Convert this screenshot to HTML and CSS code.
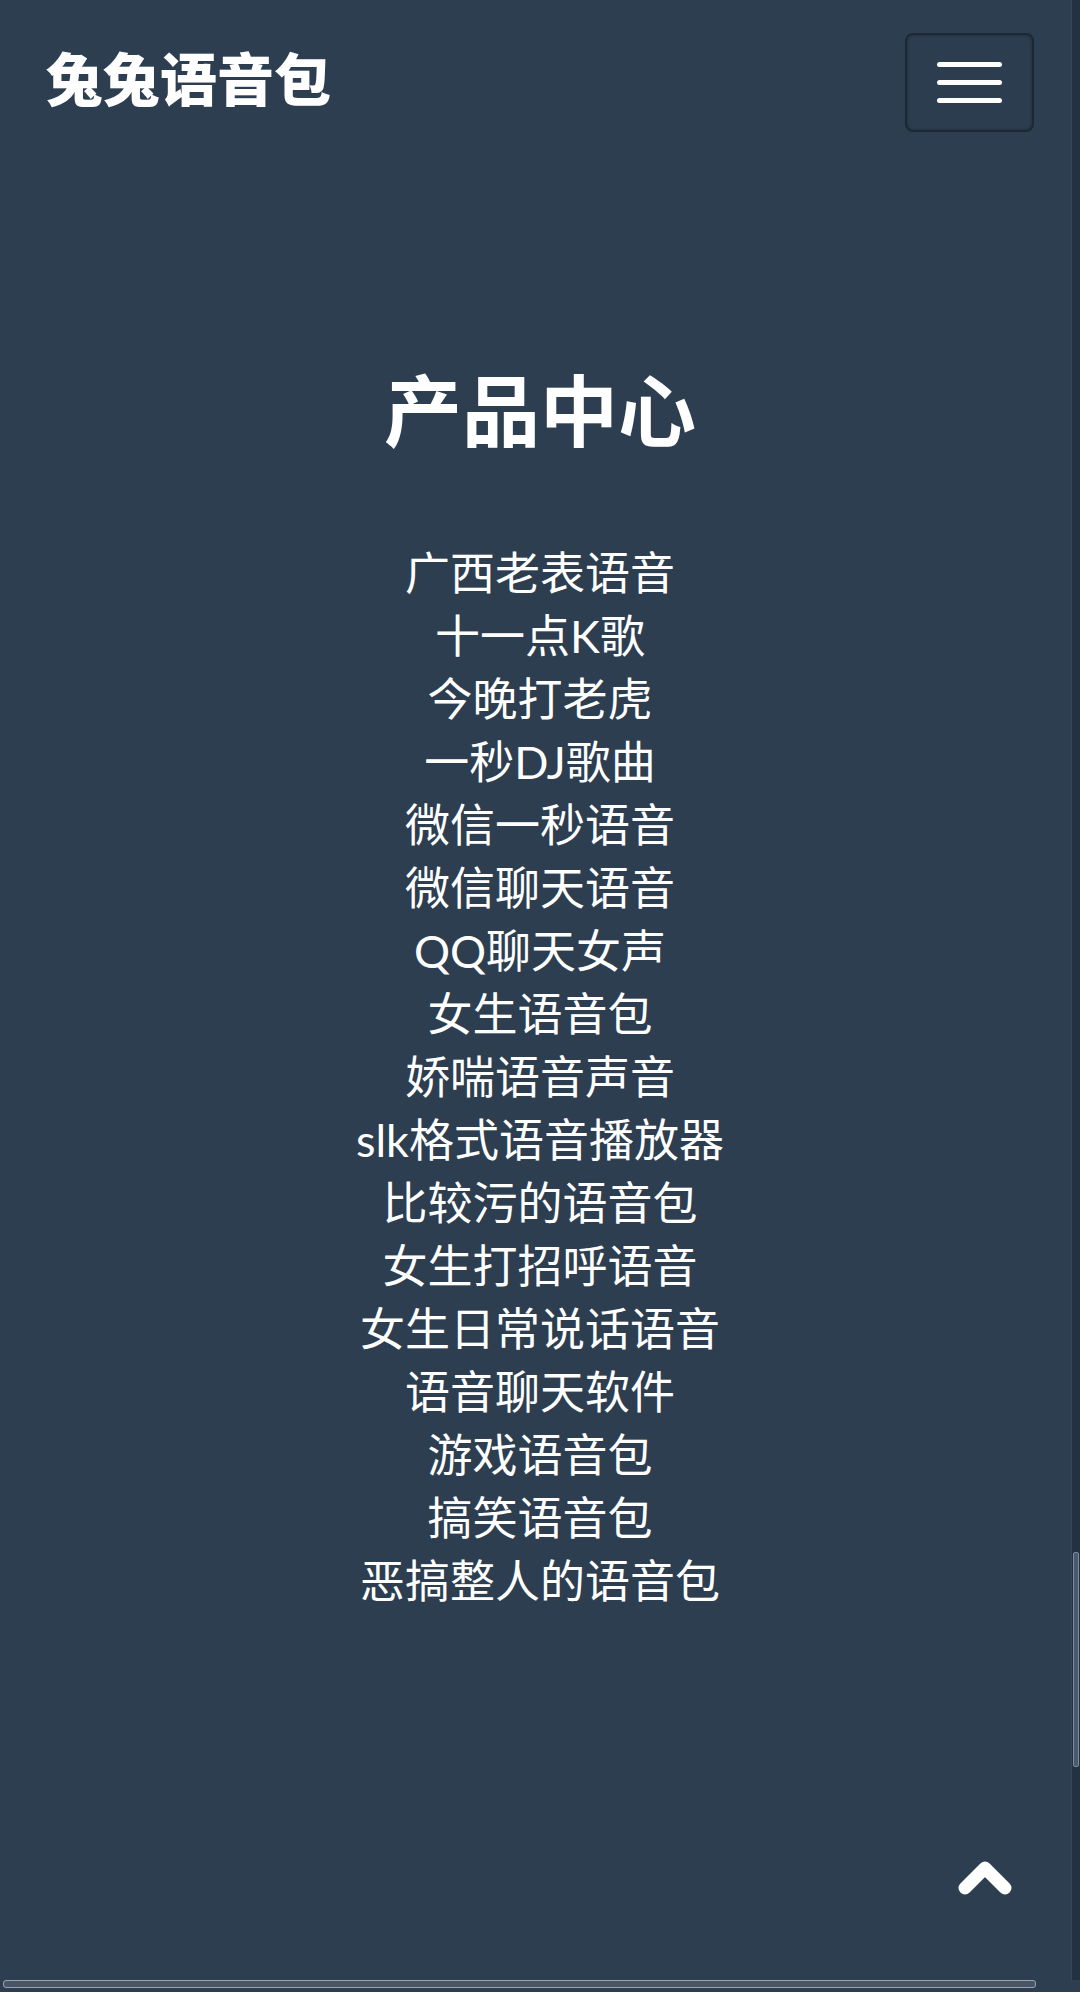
FILE: index.html
```html
<!DOCTYPE html>
<html lang="zh-CN">
<head>
<meta charset="utf-8">
<title>兔兔语音包</title>
<link rel="stylesheet" href="styles.css">
</head>
<body>
<nav class="navbar">
  <a class="brand" href="#">兔兔语音包</a>
  <button class="toggler" type="button" aria-label="菜单">
    <span class="bar"></span>
    <span class="bar"></span>
    <span class="bar"></span>
  </button>
</nav>
<section class="products">
  <h2 class="products-title">产品中心</h2>
  <ul class="product-list">
    <li>广西老表语音</li>
    <li>十一点K歌</li>
    <li>今晚打老虎</li>
    <li>一秒DJ歌曲</li>
    <li>微信一秒语音</li>
    <li>微信聊天语音</li>
    <li>QQ聊天女声</li>
    <li>女生语音包</li>
    <li>娇喘语音声音</li>
    <li>slk格式语音播放器</li>
    <li>比较污的语音包</li>
    <li>女生打招呼语音</li>
    <li>女生日常说话语音</li>
    <li>语音聊天软件</li>
    <li>游戏语音包</li>
    <li>搞笑语音包</li>
    <li>恶搞整人的语音包</li>
  </ul>
</section>
<a class="to-top" href="#" aria-label="返回顶部">
  <svg viewBox="0 0 60 40" width="60" height="40"><polyline points="10,32 30,12 50,32" fill="none" stroke="#ffffff" stroke-width="13" stroke-linecap="round" stroke-linejoin="round"/></svg>
</a>
<div class="vscroll"><div class="vthumb"></div></div>
<div class="hscroll"></div>
</body>
</html>
```
FILE: styles.css
```css
html, body {
  margin: 0;
  padding: 0;
}
body {
  background: #2c3e50;
  color: #ffffff;
  font-family: Lato, "Noto Sans CJK SC", sans-serif;
  min-height: 1992px;
  overflow: hidden;
}
.navbar {
  display: flex;
  justify-content: space-between;
  align-items: center;
  padding: 33px 46px 0 46px;
}
.brand {
  color: #ffffff;
  text-decoration: none;
  font-size: 57px;
  font-weight: 900;
  line-height: 1;
  margin-bottom: 6px;
}
.toggler {
  box-sizing: border-box;
  width: 129px;
  height: 99px;
  border: 2px solid #1c2835;
  border-radius: 8px;
  background: #2c3d4f;
  box-shadow: inset 0 0 3px rgba(0,0,0,0.35);
  display: flex;
  flex-direction: column;
  align-items: center;
  justify-content: center;
  gap: 13px;
  padding: 0;
}
.bar {
  display: block;
  width: 65px;
  height: 5px;
  border-radius: 3px;
  background: #ffffff;
}
.products {
  text-align: center;
  padding-top: 240px;
}
.products-title {
  margin: 0;
  font-size: 78px;
  font-weight: 700;
  line-height: 1;
}
.product-list {
  list-style: none;
  margin: 92px 0 0 0;
  padding: 0;
  font-size: 45px;
  line-height: 63px;
}
.to-top {
  position: fixed;
  right: 65px;
  bottom: 96px;
  width: 60px;
  height: 40px;
  display: block;
}
.to-top svg {
  display: block;
}
.vscroll {
  position: fixed;
  top: 0;
  right: 0;
  width: 8px;
  height: 1980px;
  background: rgba(20, 30, 42, 0.35);
  border-left: 1px solid rgba(120, 135, 155, 0.25);
}
.vthumb {
  position: absolute;
  top: 1552px;
  left: 1px;
  width: 6px;
  height: 215px;
  background: #4a5a6e;
  border: 1px solid #7d8a9c;
  border-radius: 2px;
  box-sizing: border-box;
}
.hscroll {
  position: fixed;
  left: 3px;
  bottom: 4px;
  width: 1033px;
  height: 8px;
  box-sizing: border-box;
  background: #4a5566;
  border: 1px solid #98a3b2;
  border-radius: 3px;
}
```
